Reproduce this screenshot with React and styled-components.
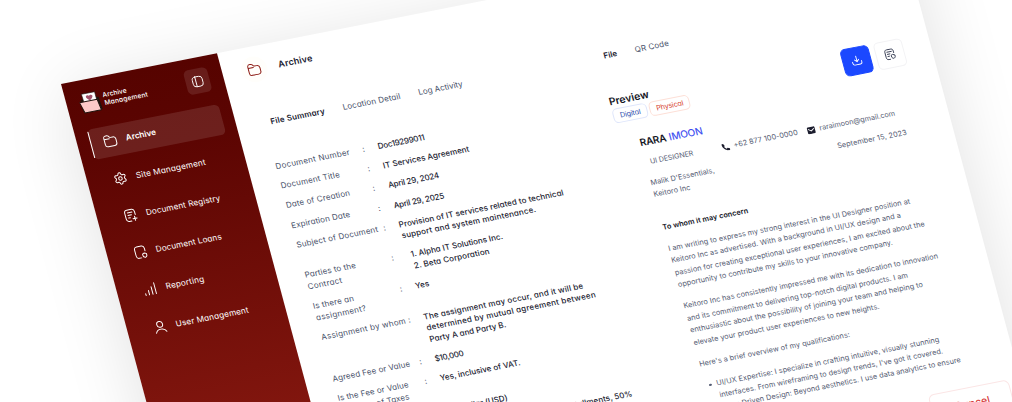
import React from "react";
import styled, { createGlobalStyle } from "styled-components";
import { Settings } from "lucide-react";

const GlobalStyle = createGlobalStyle`
  html, body { margin: 0; padding: 0; background: #fff; overflow: hidden; }
  * { box-sizing: border-box; }
`;

const Stage = styled.div`
  width: 1012px;
  height: 402px;
  overflow: hidden;
  background: #fff;
  font-family: Inter, "Liberation Sans", sans-serif;
`;

const Panel = styled.div`
  display: flex;
  width: 852px;
  height: 640px;
  background: #fff;
  transform-origin: 0 0;
  transform: matrix(0.981, -0.1935, 0.2605, 0.97, 61, 84);
  box-shadow: 0 10px 70px rgba(0, 0, 0, 0.12);
  font-feature-settings: "cv11";
`;

const Text = styled.span`
  display: block;
  white-space: pre;
  font-size: ${(p) => p.$size || 8}px;
  font-weight: ${(p) => p.$weight || 400};
  letter-spacing: ${(p) => p.$track || 0}px;
  color: ${(p) => p.$color || "inherit"};
`;

/* Sidebar */
const Sidebar = styled.aside`
  width: 159px;
  flex: none;
  padding: 11px 12px 0 12.5px;
  color: #fff;
  background: linear-gradient(180deg, #560300 0, #5c0502 80px, #84170f 380px, #a0241a 640px);
`;
const Brand = styled.div`
  display: flex;
  align-items: center;
  height: 25px;
  padding-right: 2px;
`;
const BrandName = styled.div`
  flex: 1;
  margin-left: 2.3px;
  line-height: 7.7px;
`;
const Toggle = styled.div`
  display: flex;
  align-items: center;
  justify-content: center;
  width: 24px;
  height: 25px;
  border-radius: 5px;
  background: rgba(255, 255, 255, 0.1);
`;
const Nav = styled.nav`
  display: flex;
  flex-direction: column;
  gap: 7.8px;
  margin-top: 14px;
`;
const NavItem = styled.div`
  display: flex;
  align-items: center;
  gap: 9px;
  height: 30.5px;
  border-radius: 5px;
  background: ${(p) => (p.$active ? "rgba(255, 255, 255, 0.11)" : "transparent")};

  &::before {
    content: "";
    width: 1.3px;
    height: 27.5px;
    margin-right: 3px;
    border-radius: 1px;
    background: ${(p) => (p.$active ? "#fff" : "transparent")};
  }
`;

/* Main area */
const Main = styled.main`
  flex: 1;
  min-width: 0;
`;
const Header = styled.header`
  display: flex;
  align-items: center;
  gap: 11.8px;
  height: 45px;
  padding-left: 18.6px;
`;
const HeaderIcon = styled.div`
  display: flex;
  align-items: center;
  justify-content: center;
  width: 26px;
  height: 26px;
  border-radius: 50%;
  background: #fffefb;
`;
const Columns = styled.div`
  display: flex;
  padding-top: 22px;
`;
const Summary = styled.section`
  width: 339px;
  flex: none;
  padding-left: 27.2px;
`;
const Preview = styled.section`
  width: 354px;
  flex: none;
  padding-left: 27.8px;
`;
const Tabs = styled.div`
  display: flex;
  align-items: center;
  gap: 18.2px;
  height: 20px;
  padding-left: 6.8px;
  color: #475069;
`;
const Details = styled.dl`
  display: flex;
  flex-direction: column;
  gap: 8.4px;
  margin: 30.4px 0 0;
  line-height: 11.65px;
`;
const DetailRow = styled.div`
  display: flex;
`;
const Label = styled.dt`
  width: 88.4px;
  color: #475069;
`;
const Colon = styled.div`
  width: 15.9px;
  font-size: 8px;
  color: #475069;
`;
const Value = styled.dd`
  margin: 0;
  padding-left: ${(p) => (p.$list ? 4 : 0)}px;
  color: #1a1b31;
`;

const PreviewHead = styled.div`
  display: flex;
  justify-content: space-between;
  margin-top: 29px;
  padding-right: 27.4px;
  height: 32px;
`;
const TitleBlock = styled.div`
  line-height: 15px;
`;
const Chips = styled.div`
  display: flex;
  gap: 2.5px;
  padding-left: 0.2px;
`;
const Chip = styled.div`
  display: flex;
  align-items: center;
  justify-content: center;
  width: ${(p) => p.$w}px;
  height: 15.2px;
  border: 1px solid ${(p) => p.$line};
  border-radius: 5px;
  color: ${(p) => p.$ink};
`;
const Actions = styled.div`
  display: flex;
  gap: 5px;
  padding-top: 0.8px;
`;
const ActionButton = styled.div`
  display: flex;
  align-items: center;
  justify-content: center;
  width: 28.7px;
  height: 28.4px;
  border-radius: 5px;
  border: 1px solid ${(p) => (p.$primary ? "#1b48ff" : "#f3f3f5")};
  background: ${(p) => (p.$primary ? "#1b48ff" : "#fff")};
`;

const Letter = styled.article`
  height: 324.2px;
  overflow: hidden;
  padding: 15px 0 0 19.3px;
  color: #565d74;
  line-height: 12.4px;
  font-feature-settings: normal;
`;
const Name = styled.div`
  display: flex;
  gap: 3px;
  color: #15161f;
`;
const Contact = styled.div`
  display: flex;
  align-items: center;
  height: 12.4px;
  margin-top: 8.6px;
  padding-left: 5px;
`;
const Role = styled.div`
  width: 72.8px;
`;
const ContactItem = styled.div`
  display: flex;
  align-items: center;
  gap: ${(p) => p.$gap}px;
  width: ${(p) => p.$w}px;
`;
const AddressRow = styled.div`
  display: flex;
  justify-content: space-between;
  width: 261px;
  margin-top: 8.6px;
`;
const Salutation = styled.div`
  margin-top: 21px;
`;
const Paragraph = styled.div`
  margin-top: 9.8px;
`;
const Bullets = styled.ul`
  margin: 9.4px 0 0;
  padding: 0;
  list-style: none;
`;
const Bullet = styled.li`
  display: flex;
`;
const Dot = styled.i`
  width: 2.4px;
  height: 2.4px;
  margin: 5.4px 5px 0 4.2px;
  border-radius: 50%;
  background: #565d74;
`;
const Footer = styled.footer`
  display: flex;
  justify-content: flex-end;
  padding-right: 11.6px;
`;
const CancelButton = styled.div`
  display: flex;
  align-items: center;
  justify-content: center;
  width: 82px;
  height: 33px;
  border: 1px solid #fbe6e6;
  border-radius: 6px;
  color: #d8403c;
`;

const Svg = styled.svg`
  flex: none;
  display: block;
`;

const Icon = ({ size = 14, width = 1.7, color = "currentColor", children }) => (
  <Svg
    width={size}
    height={size}
    viewBox="0 0 24 24"
    fill="none"
    stroke={color}
    strokeWidth={width}
    strokeLinecap="round"
    strokeLinejoin="round"
  >
    {children}
  </Svg>
);

const FolderIcon = (p) => (
  <Icon {...p}>
    <path d="M22 11v6c0 3.500-1 4.500-4.500 4.500H6.500C3 21.500 2 20.500 2 17V7c0-3.500 1-4.500 4.500-4.500H8c1.500 0 1.830.440 2.400 1.200l1.500 2c.380.500.600.800 1.600.800h4C21 6.500 22 7.500 22 11Z" />
    <path d="M2.500 8.500H11" />
  </Icon>
);
const RegistryIcon = () => (
  <Icon>
    <path d="M20.500 12V7c0-3.500-1.500-5-4.500-5H8C5 2 3.500 3.500 3.500 7v10c0 3.500 1.500 5 4.500 5h4" />
    <path d="M8 7h8M8 11.500h6M8 16h3M18.500 15v7M15 18.500h7" />
  </Icon>
);
const LoansIcon = () => (
  <Icon>
    <path d="M20.500 11V7c0-3.500-1.500-5-4.500-5H8C5 2 3.500 3.500 3.500 7v10c0 3.500 1.500 5 4.500 5h4" />
    <path d="M18.300 14.500 21.600 16v3.200c0 1.300-1.600 2.500-3.300 3.200-1.700-.7-3.300-1.900-3.300-3.200V16Z" />
  </Icon>
);
const BarsIcon = () => (
  <Icon>
    <path d="M2.500 21.500v-3M8.500 21.500V14M14.500 21.500V8.500M20.500 21.500v-19" />
  </Icon>
);
const UserIcon = () => (
  <Icon>
    <circle cx="12" cy="7.500" r="5" />
    <path d="M3 21.500c1.300-3.800 4.800-5.600 9-5.600s7.700 1.800 9 5.600" />
  </Icon>
);
const SidebarIcon = () => (
  <Icon size={12} width={1.8}>
    <rect x="2" y="2" width="20" height="20" rx="6" />
    <path d="M8.500 2v20" />
  </Icon>
);
const DownloadIcon = () => (
  <Icon size={11} width={2} color="#fff">
    <path d="M12 2.500v12M7.500 10.500 12 15l4.500-4.500M2 14.500v2.500c0 3 1 4.500 4 4.500h12c3 0 4-1.500 4-4.500v-2.500" />
  </Icon>
);
const ReportIcon = () => (
  <Icon size={12} width={1.8} color="#343a52">
    <path d="M20.500 10V7c0-3.500-1.500-5-4.500-5H8C5 2 3.500 3.500 3.500 7v10c0 3.500 1.500 5 4.500 5h3" />
    <path d="M7.500 6.800h9M7.500 11.200h5M7.500 15.600h3" />
    <path d="M18 13.500 21.600 15v3c0 1.500-1.600 2.700-3.600 3.500-2-.8-3.600-2-3.600-3.500v-3Z" />
  </Icon>
);

const LogoMark = () => (
  <Svg width="22.500" height="22" viewBox="0 0 45 44">
    <path d="M4 14h35l2 24H8Z" fill="#20140f" stroke="#20140f" strokeWidth="2" strokeLinejoin="round" />
    <path d="M8 2h27v20H9Z" fill="#fff" stroke="#1b1413" strokeWidth="1.200" />
    <path d="M15.500 8c2.500-3 5-2 6.500 0 1.500-2 5-2.500 6.500 0 1.200 3-2.500 6-6.500 9-4-3-7.700-6-6.500-9Z" fill="#a2516a" />
    <path d="M0 18h36l3 22H5.500Z" fill="#fcc9c8" stroke="#20140f" strokeWidth="2" strokeLinejoin="round" />
  </Svg>
);

const PhoneIcon = () => (
  <Svg width="8.500" height="8.500" viewBox="0 0 24 24" fill="#1c1d2e">
    <path d="M6.600 1.500 9.800 8 7.200 10.500c1.300 2.700 3.600 5 6.300 6.300L16 14.200l6.500 3.200v3.100c0 1.200-1 2-2.200 2C10.200 22 2 13.800 1.500 3.700c0-1.200.8-2.200 2-2.200Z" />
  </Svg>
);
const MailIcon = () => (
  <Svg width="8.500" height="8.500" viewBox="0 0 24 24">
    <rect x="1" y="2" width="22" height="20" rx="3.500" fill="#1c1d2e" />
    <path d="M3.500 7.500 12 13.500l8.500-6" fill="none" stroke="#fff" strokeWidth="2.600" />
  </Svg>
);

const navItems = [
  { label: "Archive", icon: <FolderIcon />, active: true, weight: 600, track: 0 },
  { label: "Site Management", icon: <Settings size={14} strokeWidth={1.7} />, track: 0.16 },
  { label: "Document Registry", icon: <RegistryIcon />, track: 0.11 },
  { label: "Document Loans", icon: <LoansIcon />, track: 0.08 },
  { label: "Reporting", icon: <BarsIcon />, track: 0.16 },
  { label: "User Management", icon: <UserIcon />, track: 0.13 },
];

/* Every line is [text, letter spacing]. */
const details = [
  { label: [["Document Number", 0.29]], value: [["Doc19299011", -0.26]] },
  { label: [["Document Title", 0.19]], value: [["IT Services Agreement", 0.02]] },
  { label: [["Date of Creation", 0.17]], value: [["April 29, 2024", -0.2]] },
  { label: [["Expiration Date", 0.12]], value: [["April 29, 2025", -0.22]] },
  {
    label: [["Subject of Document", 0.17]],
    value: [["Provision of IT services related to technical", 0.05], ["support and system maintenance.", 0.18]],
  },
  {
    label: [["Parties to the", 0.11], ["Contract", 0.26]],
    value: [["1. Alpha IT Solutions Inc.", 0], ["2. Beta Corporation", 0.09]],
    list: true,
  },
  { label: [["Is there an", 0.13], ["assignment?", 0.27]], value: [["Yes", 0.03]] },
  {
    label: [["Assignment by whom", 0.26]],
    value: [
      ["The assignment may occur, and it will be", 0.15],
      ["determined by mutual agreement between", 0.25],
      ["Party A and Party B.", -0.02],
    ],
  },
  { label: [["Agreed Fee or Value", 0.09]], value: [["$10,000", -0.3]] },
  { label: [["Is the Fee or Value", 0.09], ["Inclusive of Taxes", 0.09]], value: [["Yes, inclusive of VAT.", 0]] },
  { label: [["Currency", 0.1]], value: [["US Dollar (USD)", -0.05]] },
  {
    label: [["Payment Terms", 0.1]],
    value: [["Payment will be made in two installments, 50%", 0.03], ["upfront and the remaining 50% upon completion", 0.14]],
  },
];

const paragraphs = [
  [
    "I am writing to express my strong interest in the UI Designer position at",
    "Keitoro Inc as advertised. With a background in UI/UX design and a",
    "passion for creating exceptional user experiences, I am excited about the",
    "opportunity to contribute my skills to your innovative company.",
  ],
  [
    "Keitoro Inc has consistently impressed me with its dedication to innovation",
    "and its commitment to delivering top-notch digital products. I am",
    "enthusiastic about the possibility of joining your team and helping to",
    "elevate your product user experiences to new heights.",
  ],
  ["Here's a brief overview of my qualifications:"],
];

const bullets = [
  ["UI/UX Expertise: I specialize in crafting intuitive, visually stunning", "interfaces. From wireframing to design trends, I've got it covered."],
  ["User-Driven Design: Beyond aesthetics. I use data analytics to ensure"],
];

const LetterText = (p) => <Text $size={7.3} $track={0.035} {...p} />;

export default function App() {
  return (
    <>
      <GlobalStyle />
      <Stage>
        <Panel>
          <Sidebar>
            <Brand>
              <LogoMark />
              <BrandName>
                <Text $size={6.6} $weight={500} $track={0.06}>Archive</Text>
                <Text $size={6.6} $weight={500} $track={0.21}>Management</Text>
              </BrandName>
              <Toggle><SidebarIcon /></Toggle>
            </Brand>
            <Nav>
              {navItems.map((n) => (
                <NavItem key={n.label} $active={n.active}>
                  {n.icon}
                  <Text $size={8.2} $weight={n.weight} $track={n.track}>{n.label}</Text>
                </NavItem>
              ))}
            </Nav>
          </Sidebar>

          <Main>
            <Header>
              <HeaderIcon><FolderIcon color="#8c1a14" /></HeaderIcon>
              <Text $size={9} $weight={600} $track={0.17} $color="#1a1b31">Archive</Text>
            </Header>
            <Columns>
              <Summary>
                <Tabs>
                  <Text $weight={600} $track={0.19} $color="#1a1b31">File Summary</Text>
                  <Text $track={0.13}>Location Detail</Text>
                  <Text $track={0.03}>Log Activity</Text>
                </Tabs>
                <Details>
                  {details.map(({ label, value, list }) => (
                    <DetailRow key={label[0][0]}>
                      <Label>
                        {label.map(([t, k]) => <Text key={t} $track={k}>{t}</Text>)}
                      </Label>
                      <Colon>:</Colon>
                      <Value $list={list}>
                        {value.map(([t, k]) => <Text key={t} $weight={500} $track={k}>{t}</Text>)}
                      </Value>
                    </DetailRow>
                  ))}
                </Details>
              </Summary>

              <Preview>
                <Tabs>
                  <Text $weight={600} $color="#1a1b31">File</Text>
                  <Text $track={0.13}>QR Code</Text>
                </Tabs>
                <PreviewHead>
                  <TitleBlock>
                    <Text $size={10.4} $weight={600} $track={0.04} $color="#15161f">Preview</Text>
                    <Chips>
                      <Chip $w={35} $line="#dfe6fb" $ink="#2b4cad"><Text $size={7.1} $track={-0.06}>Digital</Text></Chip>
                      <Chip $w={40.5} $line="#fde0d8" $ink="#d6402e"><Text $size={7.1} $track={-0.12}>Physical</Text></Chip>
                    </Chips>
                  </TitleBlock>
                  <Actions>
                    <ActionButton $primary><DownloadIcon /></ActionButton>
                    <ActionButton><ReportIcon /></ActionButton>
                  </Actions>
                </PreviewHead>

                <Letter>
                  <Name>
                    <Text $size={10} $weight={600} $track={-0.25}>RARA</Text>
                    <Text $size={10} $weight={500} $track={-0.15} $color="#3f51f0">IMOON</Text>
                  </Name>
                  <Contact>
                    <Role><LetterText $size={7.1} $track={-0.05}>UI DESIGNER</LetterText></Role>
                    <ContactItem $gap={3.8} $w={87.5}><PhoneIcon /><LetterText>+62 877 100-0000</LetterText></ContactItem>
                    <ContactItem $gap={3.8}><MailIcon /><LetterText $size={7.2}>raraimoon@gmail.com</LetterText></ContactItem>
                  </Contact>
                  <AddressRow>
                    <div>
                      <LetterText>Malik D'Essentials,</LetterText>
                      <LetterText>Keitoro Inc</LetterText>
                    </div>
                    <LetterText $track={0.08}>September 15, 2023</LetterText>
                  </AddressRow>
                  <Salutation>
                    <LetterText $weight={600} $color="#15161f">To whom it may concern</LetterText>
                  </Salutation>
                  {paragraphs.map((lines) => (
                    <Paragraph key={lines[0]}>
                      {lines.map((t) => <LetterText key={t}>{t}</LetterText>)}
                    </Paragraph>
                  ))}
                  <Bullets>
                    {bullets.map((lines) => (
                      <Bullet key={lines[0]}>
                        <Dot />
                        <div>{lines.map((t) => <LetterText key={t}>{t}</LetterText>)}</div>
                      </Bullet>
                    ))}
                  </Bullets>
                </Letter>
                <Footer>
                  <CancelButton><Text $size={10.5} $weight={500}>Cancel</Text></CancelButton>
                </Footer>
              </Preview>
            </Columns>
          </Main>
        </Panel>
      </Stage>
    </>
  );
}
